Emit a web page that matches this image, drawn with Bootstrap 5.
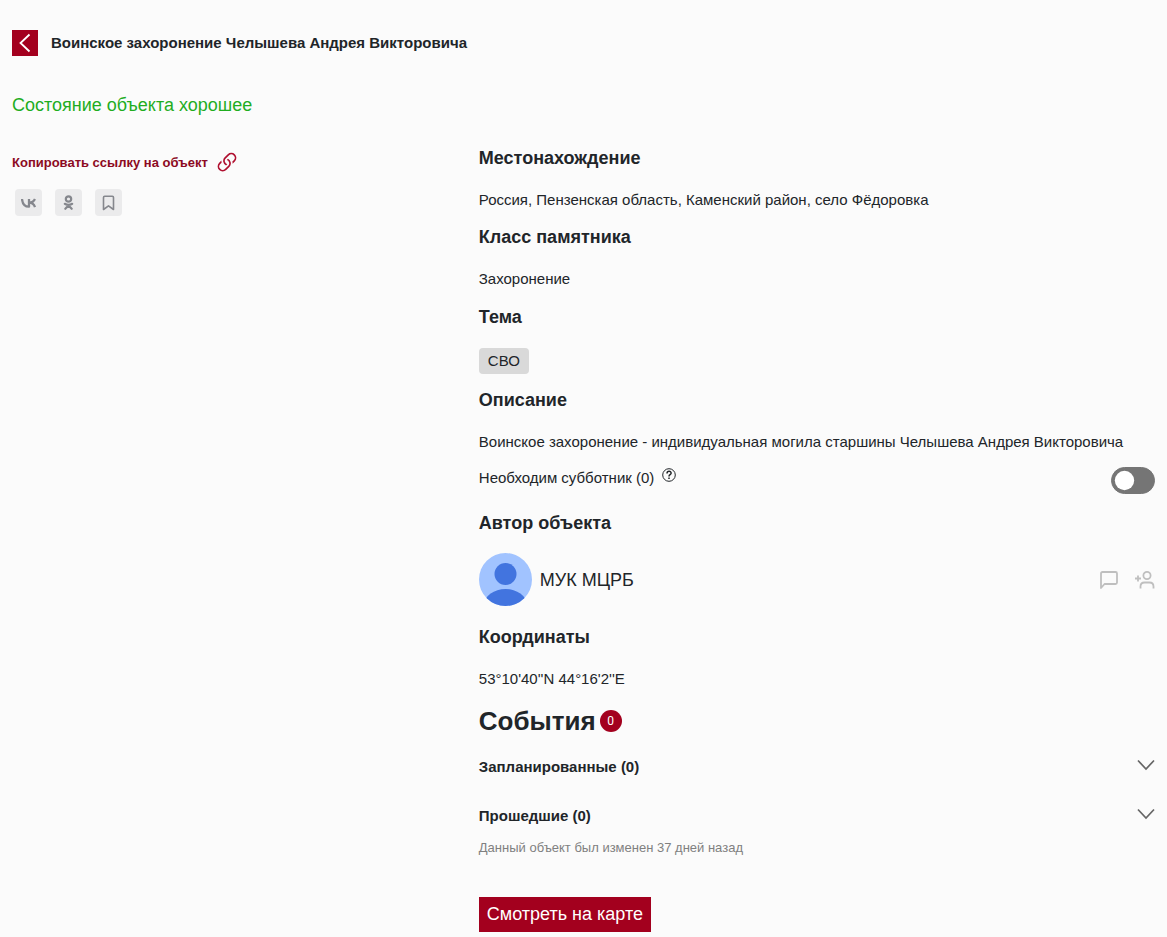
<!DOCTYPE html>
<html lang="ru">
<head>
<meta charset="utf-8">
<meta name="viewport" content="width=device-width, initial-scale=1">
<title>Воинское захоронение Челышева Андрея Викторовича</title>
<link href="https://cdn.jsdelivr.net/npm/bootstrap@5.3.0/dist/css/bootstrap.min.css" rel="stylesheet">
<style>
  body { background: #fbfbfb; color: #212529; font-family: "Liberation Sans", Arial, sans-serif; font-size: 15px; line-height: 22px; }
  h1, h2, h3, p { margin: 0; line-height: 22px; color: #212529; }
  h1, h3 { font-size: 15px; font-weight: 700; }
  h2 { font-size: 18px; font-weight: 700; }
  svg { display: block; }
  .page-head { gap: 13px; padding-top: 30px; }
  .brand-btn { background: #a3001e; color: #fff; border: 0; border-radius: 0; }
  .back-btn { width: 26px; height: 26px; padding: 0; }
  .state-text { color: #1fad1f; font-size: 18px; margin-top: 38px; }
  .object-row { margin-top: 31px; }
  .copy-link { color: #8c0a22; font-size: 13px; }
  .share-row { gap: 13px; padding: 15px 3px 0; }
  .share-btn { width: 27px; height: 27px; padding: 0; background: #ebebec; color: #85878d; border: 0; border-radius: 4px; }
  .side-part { width: 40%; padding-top: 4px; }
  .info-part { width: 60%; }
  .info-block { display: grid; gap: 20px; margin-bottom: 15px; justify-items: start; }
  .topic-block { margin-top: 16px; }
  .topic-tag { background: #d9d9d9; border-radius: 4px; padding: 2px 9px; }
  .cleanup-row { padding-top: 6px; }
  .form-switch .form-check-input { width: 44px; height: 27px; margin: 0; background-color: #757575; border-color: #757575; background-image: url("data:image/svg+xml,%3Csvg xmlns='http://www.w3.org/2000/svg' viewBox='-4 -4 8 8'%3E%3Ccircle r='3.1' fill='%23fff'/%3E%3C/svg%3E"); }
  .author-part { padding: 18px 0 20px; }
  .author-row { padding-top: 19px; }
  .author-name { font-size: 18px; }
  .icon-btn { padding: 0; border: 0; background: none; color: #bfbfbf; }
  .events-title { font-size: 26px; line-height: 32px; }
  .count-dot { width: 22px; height: 22px; background: #a3001e; color: #fff; font: 12px Roboto, sans-serif; }
  .fold-list { gap: 27px; padding: 19px 0 10px; }
  .fold-btn { padding: 0; border: 0; background: none; color: #212529; line-height: 22px; }
  .changed-text { font-size: 13px; color: #808080; margin-bottom: 38px; }
  .map-btn { font-size: 18px; line-height: 23px; padding: 6px 8px; }
</style>
</head>
<body>
<main class="container-fluid pb-1">
  <header class="page-head d-flex align-items-center">
    <button class="btn brand-btn back-btn" type="button" aria-label="Назад">
      <svg class="mx-auto" width="26" height="26" viewBox="0 0 26 26" fill="none" stroke="currentColor" stroke-width="1.8"><path d="M17.5 4.5 8.5 13l9 8.500"/></svg>
    </button>
    <h1>Воинское захоронение Челышева Андрея Викторовича</h1>
  </header>
  <p class="state-text">Состояние объекта хорошее</p>

  <div class="row object-row">
    <aside class="side-part">
      <a href="#" class="copy-link d-inline-flex align-items-center gap-2 fw-bold text-decoration-none">Копировать ссылку на объект
        <svg width="22" height="22" viewBox="1.500 1.500 13 13" fill="#b01030"><path d="M4.715 6.542 3.343 7.914a3 3 0 1 0 4.243 4.243l1.828-1.829A3 3 0 0 0 8.586 5.500L8 6.086a1.002 1.002 0 0 0-.154.199 2 2 0 0 1 .861 3.337L6.880 11.450a2 2 0 1 1-2.830-2.830l.793-.792a4.018 4.018 0 0 1-.128-1.287z"/><path d="M6.586 4.672A3 3 0 0 0 7.414 9.500l.775-.776a2 2 0 0 1-.896-3.346L9.120 3.550a2 2 0 1 1 2.830 2.830l-.793.792c.112.420.155.855.128 1.287l1.372-1.372a3 3 0 1 0-4.243-4.243L6.586 4.672z"/></svg>
      </a>
      <div class="d-flex share-row">
        <button class="btn share-btn" type="button" aria-label="ВКонтакте">
          <svg class="mx-auto" width="15" height="10" viewBox="0 0 15 10" fill="none" stroke="currentColor" stroke-width="2.300" stroke-linejoin="round"><path d="M1 1c.5 5 2.600 7.700 7 7.700V1M14 1c-1 2.300-3 3.700-6 3.700 3 0 5 1.500 6 4.300"/></svg>
        </button>
        <button class="btn share-btn" type="button" aria-label="Одноклассники">
          <svg class="mx-auto" width="11" height="16" viewBox="0 0 11 16" fill="none" stroke="currentColor" stroke-width="2.200" stroke-linecap="round"><circle cx="5.500" cy="4" r="2.700"/><path d="M1.800 8.800c2.500 1.600 4.900 1.600 7.400 0M5.500 10.500l-3.200 3.300M5.500 10.500l3.200 3.300"/></svg>
        </button>
        <button class="btn share-btn" type="button" aria-label="В закладки">
          <svg class="mx-auto" width="13" height="16" viewBox="0 0 13 16" fill="none" stroke="currentColor" stroke-width="1.600" stroke-linejoin="round"><path d="M1.500 14.500V2.500q0-1.200 1.200-1.200h7.600q1.200 0 1.200 1.200v12l-5-3.700z"/></svg>
        </button>
      </div>
    </aside>

    <div class="info-part">
      <section class="info-block"><h2>Местонахождение</h2><p>Россия, Пензенская область, Каменский район, село Фёдоровка</p></section>
      <section class="info-block"><h2>Класс памятника</h2><p>Захоронение</p></section>
      <section class="info-block topic-block"><h2>Тема</h2><span class="topic-tag">СВО</span></section>
      <section class="info-block mb-2"><h2>Описание</h2><p>Воинское захоронение - индивидуальная могила старшины Челышева Андрея Викторовича</p></section>

      <div class="cleanup-row d-flex align-items-start justify-content-between">
        <div class="d-flex gap-2">
          <label for="cleanup">Необходим субботник (0)</label>
          <svg width="14" height="16" viewBox="0 0 14 16" fill="none" stroke="currentColor"><circle cx="7" cy="8" r="6.300"/><path stroke-width="1.500" d="M5 6.500C5 3.500 9.300 3.700 9.100 6.300 9 7.800 7 7.700 7 9.400M7 10.500V12"/></svg>
        </div>
        <div class="form-check form-switch p-0 m-0 lh-1">
          <input class="form-check-input float-none" type="checkbox" role="switch" id="cleanup">
        </div>
      </div>

      <section class="author-part">
        <h2>Автор объекта</h2>
        <div class="author-row d-flex align-items-center">
          <svg width="53" height="53" viewBox="0 0 53 53"><defs><clipPath id="face"><circle cx="26.500" cy="26.500" r="26.500"/></clipPath></defs><g clip-path="url(#face)"><path fill="#a1c3ff" d="M0 0h53v53H0z"/><circle cx="26.500" cy="21" r="11" fill="#4274df"/><ellipse cx="26.500" cy="51" rx="21" ry="15" fill="#4274df"/></g></svg>
          <span class="author-name flex-grow-1 ps-2">МУК МЦРБ</span>
          <div class="d-flex gap-3">
            <button class="icon-btn" type="button" aria-label="Написать">
              <svg width="20" height="20" viewBox="0 0 20 20" fill="none" stroke="currentColor" stroke-width="1.800" stroke-linejoin="round"><path d="M2 18V3.500Q2 2 3.500 2h13Q18 2 18 3.500v9q0 1.500-1.500 1.500H5.500z"/></svg>
            </button>
            <button class="icon-btn" type="button" aria-label="Подписаться">
              <svg width="20" height="20" viewBox="0 0 20 20" fill="none" stroke="currentColor" stroke-width="1.800"><circle cx="12" cy="5.500" r="3.600"/><path d="M5.500 18.500v-2q0-4 4-4h5q4 0 4 4v2M0 8.500h6M3 5.500v6"/></svg>
            </button>
          </div>
        </div>
      </section>

      <section class="info-block"><h2>Координаты</h2><p>53°10'40''N 44°16'2''E</p></section>

      <div class="d-flex align-items-center gap-1">
        <h2 class="events-title">События</h2>
        <span class="count-dot rounded-circle d-inline-flex align-items-center justify-content-center">0</span>
      </div>
      <div class="d-grid fold-list">
        <h3><button class="fold-btn d-flex w-100 justify-content-between fw-bold" type="button">Запланированные (0)
          <svg width="18" height="18" viewBox="0 0 18 18" fill="none" stroke="#666" stroke-width="1.700"><path d="m1 4.500 8 8.500 8-8.500"/></svg></button></h3>
        <h3><button class="fold-btn d-flex w-100 justify-content-between fw-bold" type="button">Прошедшие (0)
          <svg width="18" height="18" viewBox="0 0 18 18" fill="none" stroke="#666" stroke-width="1.700"><path d="m1 4.500 8 8.500 8-8.500"/></svg></button></h3>
      </div>
      <p class="changed-text">Данный объект был изменен 37 дней назад</p>
      <button class="btn brand-btn map-btn" type="button">Смотреть на карте</button>
    </div>
  </div>
</main>
<script src="https://cdn.jsdelivr.net/npm/bootstrap@5.3.0/dist/js/bootstrap.bundle.min.js"></script>
</body>
</html>
